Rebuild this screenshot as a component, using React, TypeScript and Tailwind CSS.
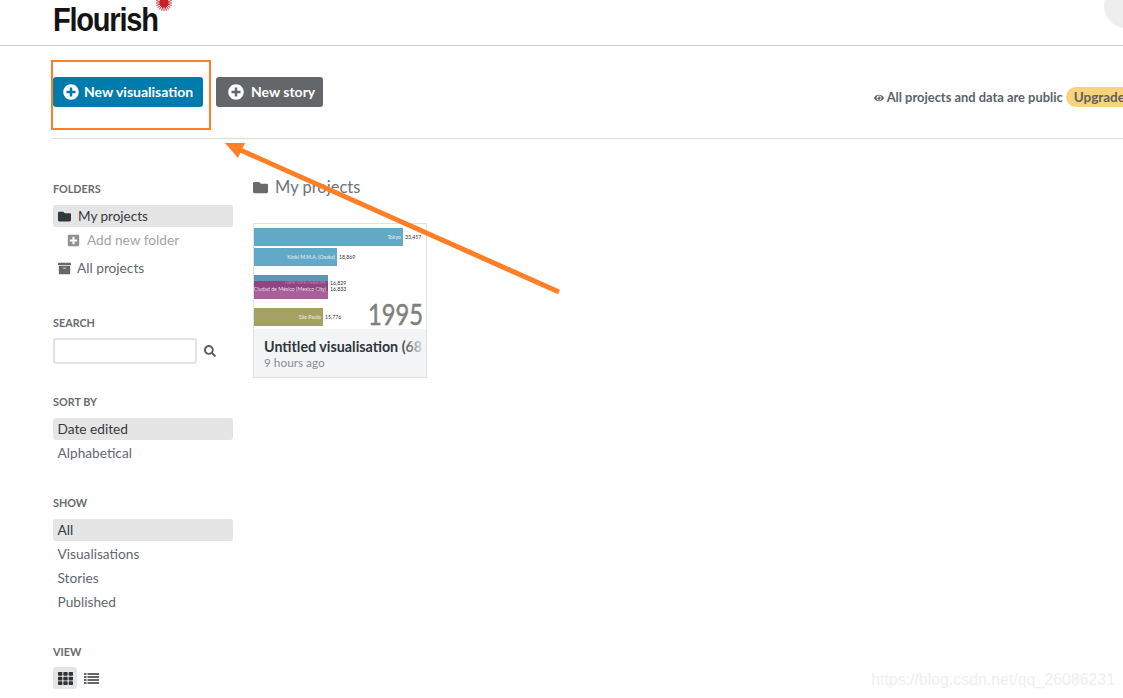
import { FaPlusCircle, FaFolder, FaPlusSquare, FaArchive, FaSearch, FaTh, FaEye } from "react-icons/fa";

function Label({ children }: { children: string }) {
  return <div className="h-[14px] leading-[14px] text-[10.8px] font-bold text-[#666b70] uppercase">{children}</div>;
}

function Item({ children, active }: { children: string; active?: boolean }) {
  return (
    <div className={`h-[22px] leading-[21px] pl-[4.5px] rounded-[3px] mb-[2px] text-[13.7px] ${active ? "bg-[#e5e5e5] text-[#333a40]" : "text-[#5f6870]"}`}>
      {children}
    </div>
  );
}

function Chart() {
  return (
    <svg width="172" height="105" viewBox="0 0 172 105" className="block" style={{ fontFamily: "Lato, sans-serif" }}>
      <rect x="0" y="4" width="149" height="18" fill="#62a9c8" />
      <text x="147" y="15" textAnchor="end" fontSize="5.2" fill="#e8f3f8">Tokyo</text>
      <text x="151" y="15" fontSize="5.2" fill="#333">33,457</text>
      <rect x="0" y="24" width="83" height="18" fill="#62a9c8" />
      <text x="81" y="35" textAnchor="end" fontSize="5.2" fill="#e8f3f8">Kinki M.M.A. (Osaka)</text>
      <text x="85" y="35" fontSize="5.2" fill="#333">18,869</text>
      <rect x="0" y="51" width="74" height="10" fill="#5f94b4" />
      <rect x="0" y="57" width="74" height="18" fill="#a9609a" />
      <rect x="0" y="57" width="74" height="10" fill="#8e4582" />
      <text x="72" y="60" textAnchor="end" fontSize="5.2" fill="#b780a8">New York-Newark</text>
      <text x="72" y="67" textAnchor="end" fontSize="5.2" fill="#f4e8f1">Ciudad de México (Mexico City)</text>
      <text x="76" y="61" fontSize="5.2" fill="#333">16,829</text>
      <text x="76" y="67" fontSize="5.2" fill="#333">16,833</text>
      <rect x="0" y="84" width="69" height="18" fill="#a5a063" />
      <text x="67" y="95" textAnchor="end" fontSize="5.2" fill="#f2f1e4">São Paulo</text>
      <text x="71" y="95" fontSize="5.2" fill="#333">15,776</text>
      <text x="114" y="101" fontSize="28" fill="#7f7f7f" stroke="#7f7f7f" strokeWidth="0.5" textLength="55" lengthAdjust="spacingAndGlyphs">1995</text>
    </svg>
  );
}

export default function App() {
  return (
    <div className="relative w-[1123px] h-[698px] overflow-hidden bg-white font-['Lato',sans-serif]">
      <header className="h-[46px] border-b border-[#cccccc] pl-[53px] flex justify-between items-start overflow-hidden">
        <div className="flex items-start">
          <span className="inline-block origin-left scale-x-[0.88] font-['Liberation_Sans',sans-serif] font-bold text-[33px] leading-[40px] tracking-[-1.4px] text-[#141414]">Flourish</span>
          <svg width="18" height="14" viewBox="0 0 18 14" className="-mt-[1px] ml-[-17px]">
            {Array.from({ length: 20 }).map((_, i) => {
              const a = (i * Math.PI) / 10;
              return <line key={i} x1={9} y1={4} x2={9 + 8 * Math.cos(a)} y2={4 + 8 * Math.sin(a)} stroke="#c8202a" strokeWidth="1" />;
            })}
            <circle cx="9" cy="4" r="4.5" fill="#c8202a" />
          </svg>
        </div>
        <div className="w-[44px] h-[44px] rounded-full bg-[#eeeeee] -mt-[16px] -mr-[25px] shrink-0" />
      </header>

      <div className="ml-[53px] h-[93px] border-b border-[#dddddd] flex justify-between pt-[31px]">
        <div className="flex gap-[13px] items-start">
          <button className="h-[30px] w-[150px] rounded-[3px] bg-[#007cac] text-white text-[14px] font-bold flex items-center pl-[10px] pb-[1px] gap-[5px]">
            <FaPlusCircle className="text-[16px] mt-[1px]" /> New visualisation
          </button>
          <button className="h-[30px] w-[107px] rounded-[3px] bg-[#636769] text-white text-[14px] font-bold flex items-center pl-[12px] pb-[1px] gap-[7px]">
            <FaPlusCircle className="text-[16px] mt-[1px]" /> New story
          </button>
        </div>
        <div className="flex items-center h-[22px] mt-[9px] shrink-0 mr-[-10px] text-[12.9px] font-bold text-[#5a636b]">
          <FaEye className="text-[10px] mr-[3px] mt-[2px]" />
          <span className="mt-[1px]">All projects and data are public</span>
          <span className="ml-[3px] h-[20px] leading-[20px] rounded-full bg-[#f9d27c] px-[8px] text-[#5f5f5f] text-[13.5px]">Upgrade</span>
        </div>
      </div>

      <div className="flex pl-[53px]">
        <aside className="w-[180px] shrink-0 pt-[43px]">
          <Label>Folders</Label>
          <div className="mt-[9px] h-[22px] rounded-[3px] bg-[#e5e5e5] flex items-center pl-[5px] gap-[7px] text-[13.5px] text-[#333a40]">
            <FaFolder className="text-[13px] text-[#33383c]" /> My projects
          </div>
          <div className="mt-[2px] h-[22px] flex items-center pl-[14px] gap-[7px] text-[13.7px] text-[#a0a5a9]">
            <FaPlusSquare className="text-[13px] text-[#8f8f8f]" /> Add new folder
          </div>
          <div className="mt-[6px] h-[22px] flex items-center pl-[5px] gap-[6px] text-[13.7px] text-[#5f6870]">
            <FaArchive className="text-[13px] text-[#666666]" /> All projects
          </div>

          <div className="mt-[37px]"><Label>Search</Label></div>
          <div className="mt-[8px] flex items-center gap-[7px]">
            <div className="w-[144px] h-[26px] rounded-[3px] border-2 border-[#e3e3e3] bg-white" />
            <FaSearch className="text-[12px] text-[#5a6066]" />
          </div>

          <div className="mt-[31px]"><Label>Sort by</Label></div>
          <div className="mt-[9px]">
            <Item active>Date edited</Item>
            <Item>Alphabetical</Item>
          </div>

          <div className="mt-[32px]"><Label>Show</Label></div>
          <div className="mt-[9px]">
            <Item active>All</Item>
            <Item>Visualisations</Item>
            <Item>Stories</Item>
            <Item>Published</Item>
          </div>

          <div className="mt-[32px]"><Label>View</Label></div>
          <div className="mt-[8px] flex items-center gap-[7px]">
            <div className="w-[24px] h-[22px] rounded-[3px] bg-[#e5e5e5] flex items-center justify-center">
              <FaTh className="text-[15px] text-[#2f3336]" />
            </div>
            <svg width="15" height="13" viewBox="0 0 15 13" fill="#666666">
              <rect x="0" y="1" width="2.5" height="2" /><rect x="3.5" y="1" width="11.5" height="2" />
              <rect x="0" y="4" width="2.5" height="2" /><rect x="3.5" y="4" width="11.5" height="2" />
              <rect x="0" y="7" width="2.5" height="2" /><rect x="3.5" y="7" width="11.5" height="2" />
              <rect x="0" y="10" width="2.5" height="2" /><rect x="3.5" y="10" width="11.5" height="2" />
            </svg>
          </div>
        </aside>

        <main className="ml-[20px] pt-[36px]">
          <div className="h-[24px] flex items-center gap-[7px] text-[16.5px] text-[#6b747c]">
            <FaFolder className="text-[15px] text-[#6a6a6a]" /> My projects
          </div>
          <div className="mt-[24px] w-[174px] h-[155px] border border-[#dfe1e3] flex flex-col">
            <Chart />
            <div className="flex-1 bg-[#f3f4f6] pl-[10px] pt-[9px] overflow-hidden">
              <div className="relative text-[14.3px] leading-[18px] font-bold text-[#2f363c] whitespace-nowrap overflow-hidden pr-[2px]">
                Untitled visualisation (68
                <div className="absolute right-0 top-0 h-full w-[26px] bg-gradient-to-r from-transparent to-[#f3f4f6]" />
              </div>
              <div className="text-[11.8px] leading-[13px] text-[#868e95]">9 hours ago</div>
            </div>
          </div>
        </main>
      </div>

      <div className="absolute left-[51px] top-[60px] w-[160px] h-[70px] border-2 border-[#ff7f27]" />
      <svg className="absolute left-0 top-0 pointer-events-none" width="1123" height="698">
        <line x1="559" y1="292" x2="238" y2="149" stroke="#ff7f27" strokeWidth="5" />
        <polygon points="225,143 245,143 238,158" fill="#ff7f27" />
      </svg>
      <div className="absolute right-[8px] top-[670px] font-['Liberation_Sans',sans-serif] text-[15.9px] leading-[20px] text-[#efefef]">
        https://blog.csdn.net/qq_26086231
      </div>
    </div>
  );
}
